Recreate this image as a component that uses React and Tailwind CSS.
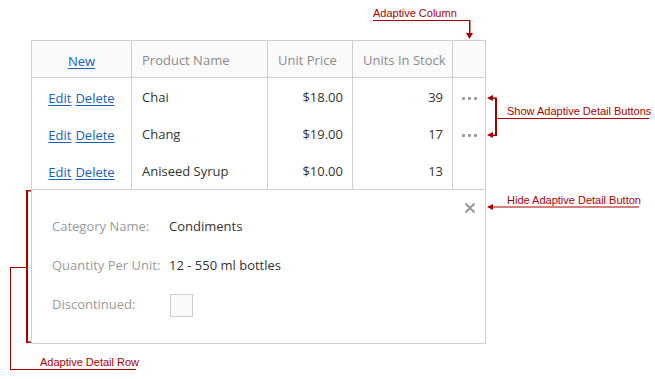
import React from "react";

const rows = [
  { name: "Chai", price: "$18.00", stock: "39", more: true },
  { name: "Chang", price: "$19.00", stock: "17", more: true },
  { name: "Aniseed Syrup", price: "$10.00", stock: "13", more: false },
];

const RED = "#a80000";

function Dots() {
  return (
    <div className="flex gap-[3px]">
      <span className="block w-[3px] h-[3px] rounded-[1px] bg-[#9a9a9a]" />
      <span className="block w-[3px] h-[3px] rounded-[1px] bg-[#9a9a9a]" />
      <span className="block w-[3px] h-[3px] rounded-[1px] bg-[#9a9a9a]" />
    </div>
  );
}

function Link({ children }) {
  return <a className="text-[#1560bd] underline underline-offset-2 cursor-pointer">{children}</a>;
}

export default function App() {
  return (
    <div
      className="relative w-[655px] h-[379px] bg-white overflow-hidden text-[13px] text-[#333]"
      style={{ fontFamily: '"Open Sans", "Noto Sans", sans-serif' }}
    >
      <div className="pt-[40px] pl-[31px]">
        <div className="w-[455px] border border-[#d0d0d0]">
          {/* header */}
          <div className="grid grid-cols-[100px_136px_85px_100px_1fr] h-[37px] bg-[#fafafa] border-b border-[#d0d0d0] text-[#8a8a8a]">
            <div className="border-r border-[#d0d0d0] flex items-center justify-center pt-[6px]">
              <Link>New</Link>
            </div>
            <div className="border-r border-[#d0d0d0] flex items-center pl-[10px] pt-[3px]">Product Name</div>
            <div className="border-r border-[#d0d0d0] flex items-center pl-[10px] pt-[3px]">Unit Price</div>
            <div className="border-r border-[#d0d0d0] flex items-center pl-[10px] pt-[3px]">Units In Stock</div>
            <div />
          </div>
          {rows.map((r) => (
            <div key={r.name} className="grid grid-cols-[100px_136px_85px_100px_1fr] h-[37px]">
              <div className="border-r border-[#d0d0d0] flex items-center justify-center gap-[4px] pt-[4px]">
                <Link>Edit</Link>
                <Link>Delete</Link>
              </div>
              <div className="border-r border-[#d0d0d0] flex items-center pl-[10px] pt-[2px]">{r.name}</div>
              <div className="border-r border-[#d0d0d0] flex items-center justify-end pr-[9px] pt-[2px]">{r.price}</div>
              <div className="border-r border-[#d0d0d0] flex items-center justify-end pr-[9px] pt-[2px]">{r.stock}</div>
              <div className="flex items-center justify-center pt-[3px]">{r.more && <Dots />}</div>
            </div>
          ))}
          {/* detail row */}
          <div className="relative border-t border-[#d0d0d0] h-[154px] pt-[17px] pl-[20px]">
            <button className="absolute right-[9px] top-[12px] w-[12px] h-[12px] flex items-center justify-center">
              <svg width="12" height="12" viewBox="0 0 12 12">
                <path d="M1.5 1.5 L10.5 10.5 M10.5 1.5 L1.5 10.5" stroke="#999999" strokeWidth="2" />
              </svg>
            </button>
            <div className="flex items-center h-[39px]">
              <span className="w-[117px] text-[#9a9a9a]">Category Name:</span>
              <span>Condiments</span>
            </div>
            <div className="flex items-center h-[39px]">
              <span className="w-[117px] text-[#9a9a9a] whitespace-nowrap">Quantity Per Unit:</span>
              <span>12 - 550 ml bottles</span>
            </div>
            <div className="flex items-center h-[39px]">
              <span className="w-[118px] text-[#9a9a9a]">Discontinued:</span>
              <span className="block w-[23px] h-[23px] border border-[#cfcfcf] bg-[#f9f9f9] mt-[2px]" />
            </div>
          </div>
        </div>
      </div>

      {/* annotation drawing */}
      <svg className="absolute left-0 top-0 pointer-events-none" width="655" height="379" viewBox="0 0 655 379">
        <g fill={RED} stroke="none">
          {/* Adaptive Column */}
          <rect x="373" y="20" width="97" height="1" />
          <rect x="469" y="20" width="1.5" height="14" />
          <polygon points="466,33 473,33 469.5,39" />
          {/* Show Adaptive Detail Buttons */}
          <polygon points="487,98 493,95 493,101" />
          <polygon points="487,135 493,132 493,138" />
          <rect x="493" y="97.5" width="3" height="1.5" />
          <rect x="493" y="134.5" width="3" height="1.5" />
          <rect x="495" y="97.5" width="2" height="38.5" />
          <rect x="496" y="118" width="153" height="1" />
          {/* Hide Adaptive Detail Button */}
          <polygon points="487,207 493,204 493,210" />
          <rect x="492" y="206.5" width="147" height="1" />
          {/* Adaptive Detail Row */}
          <rect x="26" y="190" width="2" height="153" />
          <rect x="26" y="190" width="5" height="1.5" />
          <rect x="26" y="341.5" width="5" height="1.5" />
          <rect x="10" y="267" width="17" height="1" />
          <rect x="10" y="267" width="1" height="103" />
          <rect x="10" y="369" width="126" height="1" />
        </g>
      </svg>

      <div
        className="absolute inset-0 pointer-events-none text-[11px] leading-none text-[#a80000]"
        style={{ fontFamily: '"Liberation Sans", Arial, sans-serif' }}
      >
        <span className="absolute left-[373px] top-[8px]">Adaptive Column</span>
        <span className="absolute left-[507px] top-[106px]">Show Adaptive Detail Buttons</span>
        <span className="absolute left-[507px] top-[195px]">Hide Adaptive Detail Button</span>
        <span className="absolute left-[40px] top-[357px]">Adaptive Detail Row</span>
      </div>
    </div>
  );
}
